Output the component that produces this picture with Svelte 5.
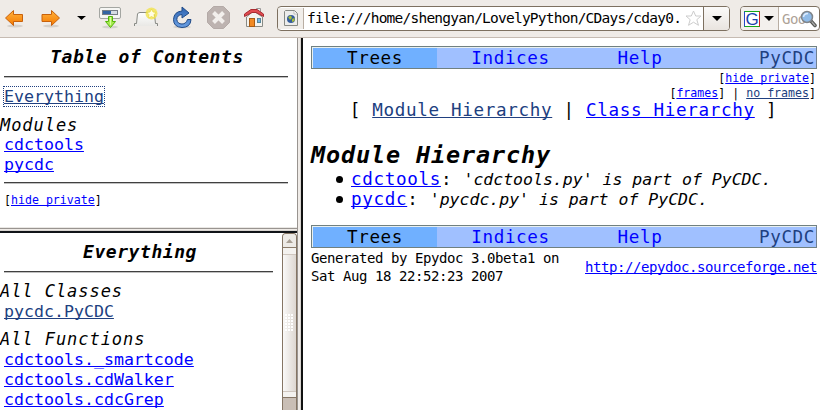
<script>
  const nav = ['Trees', 'Indices', 'Help', 'PyCDC'];
  const functions = ['cdctools._smartcode', 'cdctools.cdWalker', 'cdctools.cdcGrep'];
  const modules = ['cdctools', 'pycdc'];
</script>

{#snippet navbar()}
  <nav class="nav">
    {#each nav as item, i}
      <span class="cell c{i}">{item}</span>
    {/each}
  </nav>
{/snippet}

<div class="window">
  <header class="toolbar">
    <svg class="icons" width="270" height="37" viewBox="0 0 270 37">
      <defs>
        <linearGradient id="orange" x2="0" y2="1"><stop stop-color="#ffb33e" /><stop offset="1" stop-color="#f57900" /></linearGradient>
        <linearGradient id="blue" x2="0" y2="1"><stop stop-color="#2c62b0" /><stop offset="1" stop-color="#6ba0e4" /></linearGradient>
        <linearGradient id="tab" x2="0" y2="1"><stop stop-color="#fff" /><stop offset="1" stop-color="#e9e8e5" /></linearGradient>
      </defs>
      <ellipse cx="15" cy="26" rx="8" ry="1.5" fill="#d5d0ca" />
      <path d="M5.5 18 13.5 10.5V14.5H22.5V21.5H13.5V25.5Z" fill="url(#orange)" stroke="#c8610c" stroke-linejoin="round" />
      <ellipse cx="51" cy="26" rx="8" ry="1.5" fill="#d5d0ca" />
      <path d="M59.500 18 51.500 10.500V14.500H42V21.500H51.500V25.500Z" fill="url(#orange)" stroke="#c8610c" stroke-linejoin="round" />
      <path d="M77 16H86Q84 17.500 81.500 20Q79 17.500 77 16Z" fill="#000" />
      <ellipse cx="110" cy="27" rx="8" ry="1.500" fill="#d2d2cb" />
      <rect x="99.500" y="7.500" width="21" height="11" rx="1.500" fill="#f6f6f4" stroke="#a4a6a2" />
      <rect x="102.500" y="10.500" width="15" height="4" fill="#d7dde4" stroke="#777e86" />
      <rect x="103" y="11" width="8" height="3" fill="#3465a4" />
      <path d="M108.500 16.500H112.500V21.500H115.500L110.500 27.500 105.500 21.500H108.500Z" fill="#a8ec50" stroke="#55b50b" stroke-linejoin="round" />
      <path d="M110.500 17V25" stroke="#d9ffa0" />
      <path d="M134.500 26V23.500H136.500L137.500 14Q138 12.500 140 12.500H152Q154 12.500 154.500 15L155.500 23.500H157.500V26Z" fill="url(#tab)" />
      <path d="M134.500 26V23.500H136.500L137.500 14Q138 12.500 140 12.500H152Q154 12.500 154.500 15L155.500 23.500H157.500V26" fill="none" stroke="#888a85" />
      <circle cx="151.500" cy="13.500" r="6" fill="#f2e344" opacity=".75" />
      <path d="M151.500 9 153 12 156 12.500 154 14.700 154.400 18 151.500 16.500 148.600 18 149 14.700 147 12.500 150 12Z" fill="#fffde4" stroke="#e9d72c" stroke-width=".6" />
      <ellipse cx="182" cy="27" rx="9" ry="1.500" fill="#d5d2ce" />
      <path d="M182 7 189 13 182 18V14.500Q177 15 176.800 19.500Q177.500 24 182 24Q186 24 187.500 19.500H191Q190.500 27.500 182 27.500Q173.500 27 173.500 19.500Q174 11.500 182 11Z" fill="url(#blue)" stroke="#204a87" stroke-linejoin="round" />
      <path d="M213.500 6.500H223.500L229.500 12.500V22.500L223.500 28.500H213.500L207.500 22.500V12.500Z" fill="#bdb3b0" stroke="#b4aaa7" />
      <path d="M213.500 12.500 223.500 22.500M223.500 12.500 213.500 22.500" stroke="#f2efec" stroke-width="4" />
      <path d="M256.500 14V8.500H260.500V17" fill="#eee" stroke="#999" />
      <path d="M246.500 17 253.500 11 262.500 17V26.500H246.500Z" fill="#f5f3ee" stroke="#888a85" />
      <path d="M244.500 16.500V14L251 9.500H257L263.500 14V16.500L256 12.500H252Z" fill="#e14b50" stroke="#a92b30" stroke-linejoin="round" />
      <rect x="249.500" y="18.500" width="5" height="8" fill="#f18a24" stroke="#a85c16" />
      <rect x="257.500" y="18.500" width="3" height="4" fill="#73b6e8" stroke="#55869c" />
    </svg>
    <div class="address">
      <span class="favicon">
        <svg width="15" height="17" viewBox="0 0 15 17">
          <path d="M1.500.5H10.500L13.500 3.500V15.500H.5V1.500Z" fill="#ededeb" stroke="#888a85" />
          <path d="M10 1V4H13" fill="#fff" stroke="#aaa" stroke-width=".7" />
          <circle cx="7" cy="9" r="4" fill="#345d9c" />
          <path d="M4 7 7 5.500 8 8 6 10ZM8 9 10.500 8V11L8 12Z" fill="#a7bd3a" />
        </svg>
      </span>
      <span class="url">file:///home/shengyan/LovelyPython/CDays/cday0.</span>
      <svg class="star" width="17" height="17" viewBox="0 0 17 17"><path d="M8.500 1 10.700 6H16L11.800 9.700 13.500 15.300 8.500 12.200 3.500 15.300 5.200 9.700 1 6H6.300Z" fill="#fff" stroke="#ccc" /></svg>
      <span class="drop"><svg width="10" height="5" viewBox="0 0 10 5"><path d="M0 0H10L5 5Z" /></svg></span>
    </div>
    <div class="search">
      <span class="engine"><b class="g">G</b><svg width="10" height="5" viewBox="0 0 10 5"><path d="M0 0H10L5 5Z" /></svg></span>
      <span class="hint">Goo</span>
      <svg class="glass" width="17" height="18" viewBox="0 0 17 18">
        <path d="M10.500 10.500 15 15.500" stroke="#555753" stroke-width="3.500" stroke-linecap="round" />
        <path d="M12 12 15 15.500" stroke="#aaa" stroke-width="1.200" stroke-linecap="round" />
        <circle cx="7" cy="7" r="5.500" fill="#8fbbe8" stroke="#80858a" stroke-width="1.500" />
        <path d="M3.500 7Q4 3.500 8 3.500" stroke="#dcecff" stroke-width="1.500" fill="none" />
      </svg>
    </div>
  </header>

  <div class="frames">
    <aside class="left">
      <section class="toc">
        <h1 class="title"><span>Table of Contents</span></h1>
        <hr />
        <div class="row focusrow"><a class="visited focus" href="#all">Everything</a></div>
        <h2 class="sub">Modules</h2>
        {#each modules as m}
          <div class="row"><a href="#{m}">{m}</a></div>
        {/each}
        <hr class="low" />
        <div class="small">[<a href="#hide">hide private</a>]</div>
      </section>
      <section class="all">
        <div class="body">
          <h1 class="title"><span>Everything</span></h1>
          <hr />
          <h2 class="sub classes">All Classes</h2>
          <div class="row"><a class="visited" href="#pycdc">pycdc.PyCDC</a></div>
          <h2 class="sub">All Functions</h2>
          {#each functions as f}
            <div class="row"><a href="#{f}">{f}</a></div>
          {/each}
        </div>
        <div class="scroll">
          <div class="up"><svg width="7" height="4" viewBox="0 0 7 4"><path d="M3.500 0 7 4H0Z" fill="#a99f94" /></svg></div>
          <div class="thumb"><i class="grip"></i></div>
        </div>
      </section>
    </aside>

    <main>
      {@render navbar()}
      <div class="small opts">[<a href="#hide">hide private</a>]</div>
      <div class="small opts">[<a href="#frames">frames</a>] | <a class="visited" href="#noframes">no frames</a>]</div>
      <div class="switch">[ <a class="visited" href="#modules">Module Hierarchy</a> | <a href="#classes">Class Hierarchy</a> ]</div>
      <h1 class="heading">Module Hierarchy</h1>
      <ul>
        {#each modules as m}
          <li><i class="dot"></i><span class="name"><a href="#{m}">{m}</a>:&nbsp;</span><em>'{m}.py' is part of PyCDC.</em></li>
        {/each}
      </ul>
      {@render navbar()}
      <footer>
        <div>Generated by Epydoc 3.0beta1 on<br />Sat Aug 18 22:52:23 2007</div>
        <a href="#epydoc">http://epydoc.sourceforge.net</a>
      </footer>
    </main>
  </div>
</div>

<style>
  :global(body) { margin: 0; overflow: hidden; }
  * { box-sizing: border-box; }
  .window { width: 820px; height: 410px; overflow: hidden; display: flex; flex-direction: column; background: #fff; color: #000; font-family: "DejaVu Sans Mono", monospace; white-space: nowrap; }
  svg { display: block; flex: none; }
  a { color: #0000ff; text-decoration: underline; text-decoration-thickness: 1px; text-underline-offset: 1px; text-decoration-skip-ink: none; }
  a.visited { color: #204080; }
  h1, h2, ul { margin: 0; padding: 0; }

  .toolbar { height: 38px; flex: none; display: flex; background: #efebe7; border-bottom: 1px solid #c6bbb2; }
  .address { margin: 6px 0 0 7px; width: 453px; height: 25px; flex: none; display: flex; align-items: center; border: 1px solid #7d7060; border-radius: 4px; background: #fff; overflow: hidden; }
  .favicon { width: 26px; height: 21px; margin: 1px 0; padding-left: 6px; display: flex; align-items: center; background: #f1eeea; border-right: 1px solid #b9aea3; flex: none; }
  .url { margin-left: 3px; width: 378px; flex: none; font-size: 14.5px; letter-spacing: -0.77px; line-height: 23px; }
  .drop { margin-left: auto; width: 26px; height: 23px; display: flex; align-items: center; justify-content: center; background: linear-gradient(#fbfaf9, #e9e4df); border-left: 1px solid #7d7060; flex: none; }
  .search { margin: 6px 0 0 10px; width: 80px; height: 25px; display: flex; align-items: center; border: 1px solid #7d7060; border-radius: 4px; background: #fff; flex: none; }
  .engine { width: 38px; height: 23px; flex: none; display: flex; align-items: center; gap: 4px; padding-left: 3px; background: #f3f0ed; border-right: 1px solid #b9aea3; border-radius: 3px 0 0 3px; }
  .g { width: 16px; height: 16px; border: 1px solid; border-color: #18a818 #c22 #18a818 #2448c8; background: #fff; color: #1a3fae; font: 17px/15px "Liberation Sans", sans-serif; text-align: center; text-indent: -1px; letter-spacing: -1px; }
  .hint { width: 24px; margin-left: 3px; color: #ada297; font-size: 14px; letter-spacing: -0.5px; flex: none; }
  .glass { margin-left: -6px; }

  .frames { flex: 1; display: flex; min-height: 0; }
  .left { width: 303px; flex: none; display: flex; flex-direction: column; border-right: 2px solid #111; box-shadow: inset -1px 0 #d8d4d0, inset -3px 0 #efebe7, inset -4px 0 #999490; padding-right: 4px; }
  .toc { height: 195px; flex: none; padding-top: 9px; border-bottom: 2px solid #111418; box-shadow: inset 0 -1px #d8d4d0, inset 0 -2px #efebe7, inset 0 -3px #999490, inset 0 -4px #e9e7e4; }
  .title { height: 20px; font: italic bold 18px/20px "DejaVu Sans Mono", monospace; letter-spacing: 0.55px; display: flex; justify-content: center; padding-right: 3px; }
  hr { margin: 9px 9px 0 4px; height: 2px; border: 0; border-top: 1px solid #404040; background: #c0c0c0; }
  .row { height: 20px; line-height: 19px; padding-left: 4px; font-size: 16.6px; }
  .focusrow { margin-top: 9px; }
  .focus { outline: 1px dotted #204080; outline-offset: 0; }
  .sub { margin-top: 8px; height: 20px; font: italic 17px/19px "DejaVu Sans Mono", monospace; letter-spacing: 0.95px; }
  .toc .sub { line-height: 21px; }
  .classes { margin-top: 9px; }
  .low { margin-top: 7px; }
  .small { height: 15px; font-size: 11.6px; line-height: 15px; }
  .toc .small { margin: 9px 0 0 4px; }
  .all { flex: 1; min-height: 0; display: flex; overflow: hidden; }
  .body { width: 282px; flex: none; padding-top: 9px; }
  .body .title { padding-right: 2px; }
  .scroll { width: 15px; flex: none; display: flex; flex-direction: column; background: #c9beb5; border: 1px solid #857564; border-bottom: 0; border-radius: 4px 4px 0 0; }
  .up { height: 14px; flex: none; display: flex; align-items: center; justify-content: center; background: #edeae6; border-bottom: 1px solid #8b7b6a; border-radius: 3px 3px 0 0; }
  .thumb { height: 150px; flex: none; display: flex; align-items: center; justify-content: center; background: linear-gradient(90deg, #faf9f8, #ddd7d1); border-bottom: 1px solid #857564; box-shadow: inset 0 6px #f4f2ef, inset 0 7px #cfc6be, inset 0 -5px #f4f2ef, inset 0 -6px #cfc6be; }
  .grip { width: 9px; height: 18px; background: radial-gradient(circle at 1px 1px, #fff 0.8px, #cbc3bb 1.3px, transparent 1.6px) 0 0 / 3px 3px; }

  main { flex: 1; min-width: 0; padding: 8px 3px 0 8px; }
  .nav { height: 23px; display: flex; border: 1px solid #708080; border-right-color: #708090; padding: 1px 0 0 1px; background: #e8f0f0; line-height: 20px; font-size: 17.6px; letter-spacing: 0.6px; width: 506px; }
  .cell { height: 20px; background: #a0c0ff; color: #0000ff; text-align: center; flex: none; }
  .c0 { width: 124px; background: #70b0ff; color: #000; }
  .c1 { width: 147px; }
  .c2 { width: 112px; }
  .c3 { flex: 1; color: #204080; text-align: right; padding-right: 1px; }
  .opts { text-align: right; padding-right: 1px; position: relative; top: 2px; }
  .switch { margin-top: 1px; height: 21px; line-height: 21px; font-size: 17.6px; letter-spacing: 0.66px; text-align: center; padding-right: 1px; }
  .heading { margin-top: 20px; height: 28px; font: italic bold 23.5px/28px "DejaVu Sans Mono", monospace; letter-spacing: 0.85px; }
  ul { list-style: none; }
  li { height: 20px; display: flex; align-items: center; padding-left: 25px; line-height: 20px; font-size: 16.5px; }
  .dot { width: 7px; height: 7px; border-radius: 50%; background: #000; margin-right: 8px; }
  .name { font-size: 17.6px; letter-spacing: 0.65px; }
  em { position: relative; top: 1px; }
  ul + .nav { margin-top: 16px; }
  footer { display: flex; justify-content: space-between; align-items: center; font-size: 14px; letter-spacing: -0.43px; line-height: 18px; margin-top: 1px; }
</style>
